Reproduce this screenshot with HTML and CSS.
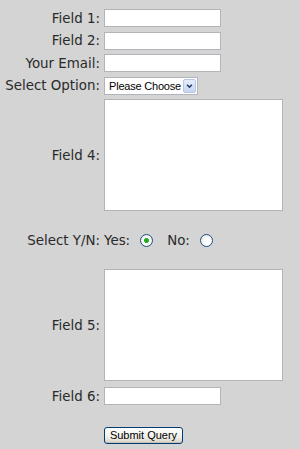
FILE: index.html
```html
<!DOCTYPE html>
<html>
<head>
<meta charset="utf-8">
<link rel="stylesheet" href="styles.css">
</head>
<body>
<form class="form">
  <label class="lbl" for="f1">Field 1:</label>
  <div class="ctl"><input class="txt" id="f1" type="text"></div>

  <label class="lbl" for="f2">Field 2:</label>
  <div class="ctl"><input class="txt" id="f2" type="text"></div>

  <label class="lbl" for="em">Your Email:</label>
  <div class="ctl"><input class="txt" id="em" type="text"></div>

  <label class="lbl" for="sel">Select Option:</label>
  <div class="ctl">
    <div class="selwrap">
      <select class="sel" id="sel"><option>Please Choose</option></select>
      <span class="arrow"><svg width="13" height="15" viewBox="0 0 13 15"><polyline points="3.5,6 6.5,9 9.5,6" fill="none" stroke="#1e3a66" stroke-width="2"/></svg></span>
    </div>
  </div>

  <label class="lbl" for="f4">Field 4:</label>
  <div class="ctl"><textarea class="area" id="f4"></textarea></div>

  <span class="lbl yn">Select Y/N:</span>
  <div class="ctl yn radios">
    <label class="opt">Yes: <input class="radio" type="radio" name="yn" checked></label>
    <label class="opt">No: <input class="radio" type="radio" name="yn"></label>
  </div>

  <label class="lbl" for="f5">Field 5:</label>
  <div class="ctl"><textarea class="area" id="f5"></textarea></div>

  <label class="lbl f6" for="f6">Field 6:</label>
  <div class="ctl f6"><input class="txt" id="f6" type="text"></div>

  <span class="lbl"></span>
  <div class="ctl submitrow"><button class="btn" type="button">Submit Query</button></div>
</form>
</body>
</html>
```
FILE: styles.css
```css
html, body {
  margin: 0;
  padding: 0;
  background: #d4d4d4;
}
body {
  font-family: "DejaVu Sans", Verdana, sans-serif;
  font-size: 13.4px;
  color: #2a2a2a;
}
.form {
  display: grid;
  grid-template-columns: 100px 196px;
  column-gap: 4px;
  row-gap: 4.5px;
  padding-top: 9px;
}
.lbl {
  text-align: right;
  align-self: center;
  white-space: nowrap;
}
.ctl {
  display: flex;
  align-items: center;
}
.txt {
  box-sizing: border-box;
  width: 117px;
  height: 18px;
  margin: 0;
  padding: 1px 2px;
  border: 1px solid #b1b5ba;
  background: #fff;
  font-family: "Liberation Sans", Arial, sans-serif;
  font-size: 11px;
  outline: none;
}
.selwrap {
  position: relative;
  width: 94px;
  height: 18px;
}
.sel {
  appearance: none;
  -webkit-appearance: none;
  box-sizing: border-box;
  width: 94px;
  height: 18px;
  margin: 0;
  padding: 0 0 0 4px;
  border: 1px solid #b1b5ba;
  border-radius: 0;
  background: #fff;
  font-family: "Liberation Sans", Arial, sans-serif;
  font-size: 11px;
  color: #000;
  letter-spacing: -0.2px;
}
.arrow {
  position: absolute;
  right: 2px;
  top: 2px;
  width: 13px;
  height: 14px;
  box-sizing: border-box;
  border: 1px solid #b7c7e3;
  border-radius: 2px;
  background: linear-gradient(#e6eefc, #c6d5f2);
  display: flex;
  align-items: center;
  justify-content: center;
  pointer-events: none;
}
.arrow svg {
  width: 11px;
  height: 12px;
}
.area {
  box-sizing: border-box;
  width: 179px;
  height: 112px;
  margin: 0;
  padding: 2px;
  border: 1px solid #b1b5ba;
  background: #fff;
  resize: none;
  outline: none;
  display: block;
}
.yn {
  height: 49px;
}
.lbl.yn {
  line-height: 49px;
}
.opt {
  display: inline-flex;
  align-items: center;
  margin-right: 14px;
}
.radio {
  appearance: none;
  -webkit-appearance: none;
  box-sizing: border-box;
  width: 13px;
  height: 13px;
  margin: 0 0 0 10px;
  border: 1px solid #1d5281;
  border-radius: 50%;
  background: radial-gradient(circle at 60% 60%, #ffffff 30%, #dcdcd7 100%);
}
.radio:checked {
  background: radial-gradient(circle, #21a121 0, #2bb52b 2.2px, #ffffff 2.8px, #ffffff 40%, #dcdcd7 100%);
}
.f6 {
  margin-top: 1.5px;
}
.submitrow {
  padding-top: 17px;
}
.btn {
  box-sizing: border-box;
  width: 79px;
  height: 17px;
  margin: 0;
  padding: 0;
  border: 1px solid #003c74;
  border-radius: 3px;
  background: linear-gradient(#ffffff 0%, #f0f0ea 60%, #d6d0c5 100%);
  box-shadow: inset 0 -1px 0 #c6c1b6;
  font-family: "Liberation Sans", Arial, sans-serif;
  font-size: 11px;
  color: #000;
}
```
